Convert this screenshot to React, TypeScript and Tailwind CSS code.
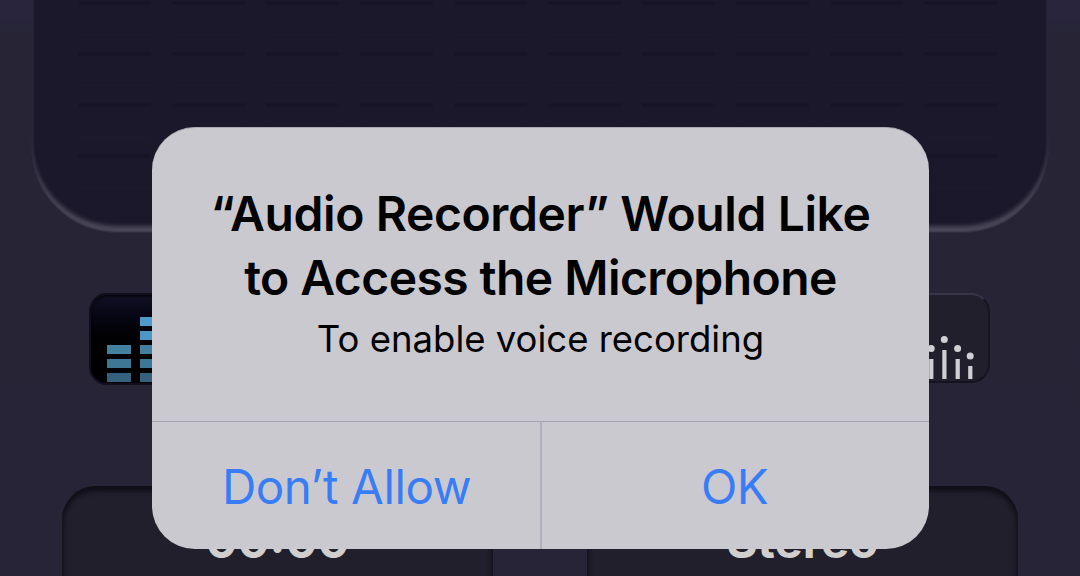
import { useState } from 'react'

const METER_CELLS = Array.from({ length: 40 }, (_, i) => i)

const BARS = [
  { key: 'a', levels: ['#43809f', '#3d7796', '#36617d'] },
  { key: 'b', levels: ['#519bcb', '#4d95c3', '#43809f', '#3d7796', '#36617d'] },
]

const DOTS = [
  { x: 4.2, dot: 22.5, top: 33 },
  { x: 17.3, dot: 13.5, top: 24 },
  { x: 30.6, dot: 22.5, top: 33 },
  { x: 43.2, dot: 30, top: 40 },
]

function MeterPanel() {
  return (
    <div className="mx-auto -mt-[8px] h-[241px] w-[1018px] shrink-0 rounded-b-[86px] bg-[#1a182a] pl-[47px] pt-[9px] shadow-[inset_0_0_2px_1px_#272437,inset_0_-7px_4px_#4b4959,inset_3px_0_3px_#201e30,inset_-3px_0_3px_#201e30]">
      <div className="grid grid-cols-[repeat(10,73px)] gap-x-[21px] gap-y-[17px]">
        {METER_CELLS.map(i => (
          <div key={i} className="h-[34px] border-b border-b-[#1c1a2c] shadow-[inset_0_4px_2px_-1px_#171526]" />
        ))}
      </div>
    </div>
  )
}

function BarsButton() {
  return (
    <div className="flex h-[92px] w-[166px] items-end gap-[9px] overflow-hidden rounded-[18px] border-2 border-[#100e1b] bg-linear-to-b from-[#121027] to-black to-80% pl-[15.5px] pb-[1px] shadow-[inset_0_2px_2px_#08070f]">
      {BARS.map(bar => (
        <div key={bar.key} className="flex flex-col gap-[5px]">
          {bar.levels.map((color, i) => (
            <div key={i} className="h-[9px] w-[24px]" style={{ backgroundColor: color }} />
          ))}
        </div>
      ))}
    </div>
  )
}

function DotsButton() {
  return (
    <div className="flex h-[90px] w-[166px] items-end justify-end rounded-[19px] border-t-2 border-r-2 border-b-2 border-t-[#38354a] border-r-[#17151f] border-b-[#14121c] bg-[#211f2c] pr-[13px]">
      <svg width="48" height="55" viewBox="0 0 48 55" fill="#d0cfd4">
        {DOTS.map(d => (
          <g key={d.x}>
            <circle cx={d.x} cy={d.dot} r="3.5" />
            <rect x={d.x - 2} y={d.top} width="4.2" height={53 - d.top} />
          </g>
        ))}
      </svg>
    </div>
  )
}

function InfoCard({ label }: { label: string }) {
  return (
    <div className="h-[150px] w-[431px] rounded-[34px] bg-[#211f2c] pt-[27px] text-center text-[47.5px] font-bold leading-[56px] text-[#d0cfce] shadow-[inset_0_5px_5px_#100e17,inset_3px_0_3px_#1d1b28,inset_-3px_0_3px_#1d1b28]">
      {label}
    </div>
  )
}

export default function App() {
  const [open, setOpen] = useState(true)

  return (
    <div className="relative flex h-[576px] w-[1080px] flex-col overflow-hidden bg-[#272438] bg-linear-to-b from-[#28253c] from-3% via-[#262435] via-6% to-[#272437] font-['Inter','Liberation_Sans',sans-serif]">
      <MeterPanel />

      <div className="mt-[60px] flex shrink-0 justify-between pl-[89px] pr-[90px]">
        <BarsButton />
        <DotsButton />
      </div>

      <div className="mt-[101px] flex shrink-0 justify-between px-[62px]">
        <InfoCard label="00:00" />
        <InfoCard label="Stereo" />
      </div>

      {/* Permission alert */}
      {open && (
        <div className="absolute left-[152px] top-[127px] flex h-[422px] w-[777px] flex-col overflow-hidden rounded-[43px] border-t border-t-[#aaa8b4] bg-[#cac9cf]">
          <div className="flex flex-1 flex-col items-center pt-[54px] text-black">
            <h1 className="whitespace-nowrap text-center text-[48px] font-semibold leading-[63.5px]">
              <span className="block tracking-[-0.4px]">“Audio Recorder” Would Like</span>
              <span className="block tracking-[-0.57px]">to Access the Microphone</span>
            </h1>
            <p className="mt-[4px] whitespace-nowrap text-[36.5px] leading-[52px]">To enable voice recording</p>
          </div>
          <div className="grid h-[128px] grid-cols-[390px_1fr] border-t border-t-[#a5a3b0] text-[47.5px] text-[#387df5]">
            <button className="border-r-2 border-r-[#b2b0bc] pt-[2px] pl-[1px] tracking-[-0.45px]" onClick={() => setOpen(false)}>
              Don’t Allow
            </button>
            <button className="pt-[2px] pr-[2px] tracking-[-0.5px]" onClick={() => setOpen(false)}>
              OK
            </button>
          </div>
        </div>
      )}
    </div>
  )
}
